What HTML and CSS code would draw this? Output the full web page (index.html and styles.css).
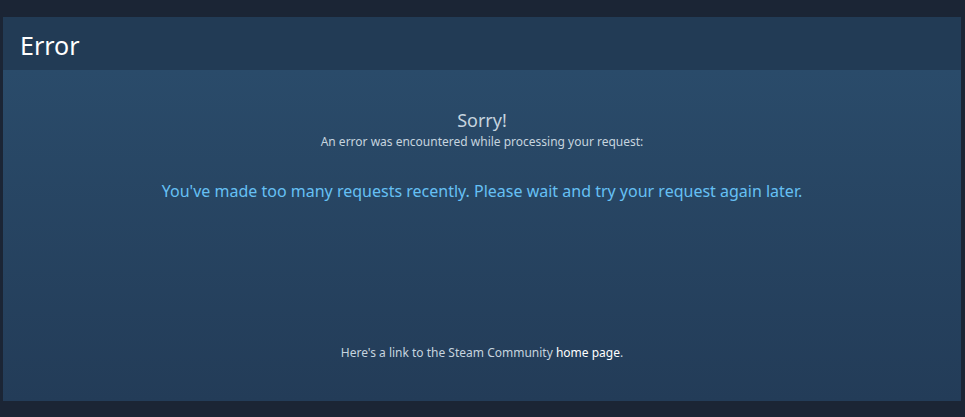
FILE: index.html
```html
<!DOCTYPE html>
<html>
<head>
<meta charset="utf-8">
<link rel="stylesheet" href="styles.css">
</head>
<body>
<div class="panel">
  <div class="panel-header"><h1 class="title">Error</h1></div>
  <div class="panel-body">
    <div class="sorry">Sorry!</div>
    <div class="sub">An error was encountered while processing your request:</div>
    <div class="message">You've made too many requests recently. Please wait and try your request again later.</div>
    <div class="footer">Here's a link to the Steam Community <a class="home" href="#">home page</a>.</div>
  </div>
</div>
</body>
</html>
```
FILE: styles.css
```css
html, body {
  margin: 0;
  padding: 0;
  background: #1b2535;
  font-family: "Noto Sans", "Open Sans", Arial, sans-serif;
}
.panel {
  margin: 17px 4px 0 3px;
  height: 384px;
  display: flex;
  flex-direction: column;
  box-shadow: inset 1px 0 0 #1f3149;
}
.panel-header {
  height: 53px;
  background: #223b55;
  display: flex;
  align-items: center;
  padding-left: 17px;
}
.title {
  margin: 0;
  margin-top: 2px;
  font-weight: 400;
  font-size: 25px;
  color: #ffffff;
  letter-spacing: 0px;
}
.panel-body {
  flex: 1;
  background: linear-gradient(to bottom, #2a4b6a 0%, #233c58 100%);
  display: flex;
  flex-direction: column;
  align-items: center;
  padding-top: 38px;
}
.sorry {
  font-size: 18px;
  color: #c6d4df;
  line-height: 24px;
}
.sub {
  margin-top: 2px;
  font-size: 12px;
  color: #c6d4df;
  line-height: 16px;
}
.message {
  margin-top: 30px;
  font-size: 16px;
  color: #66c0f4;
  line-height: 22px;
}
.footer {
  margin-top: auto;
  margin-bottom: 40px;
  font-size: 12px;
  color: #c6d4df;
}
.home {
  color: #ffffff;
  text-decoration: none;
}
```
